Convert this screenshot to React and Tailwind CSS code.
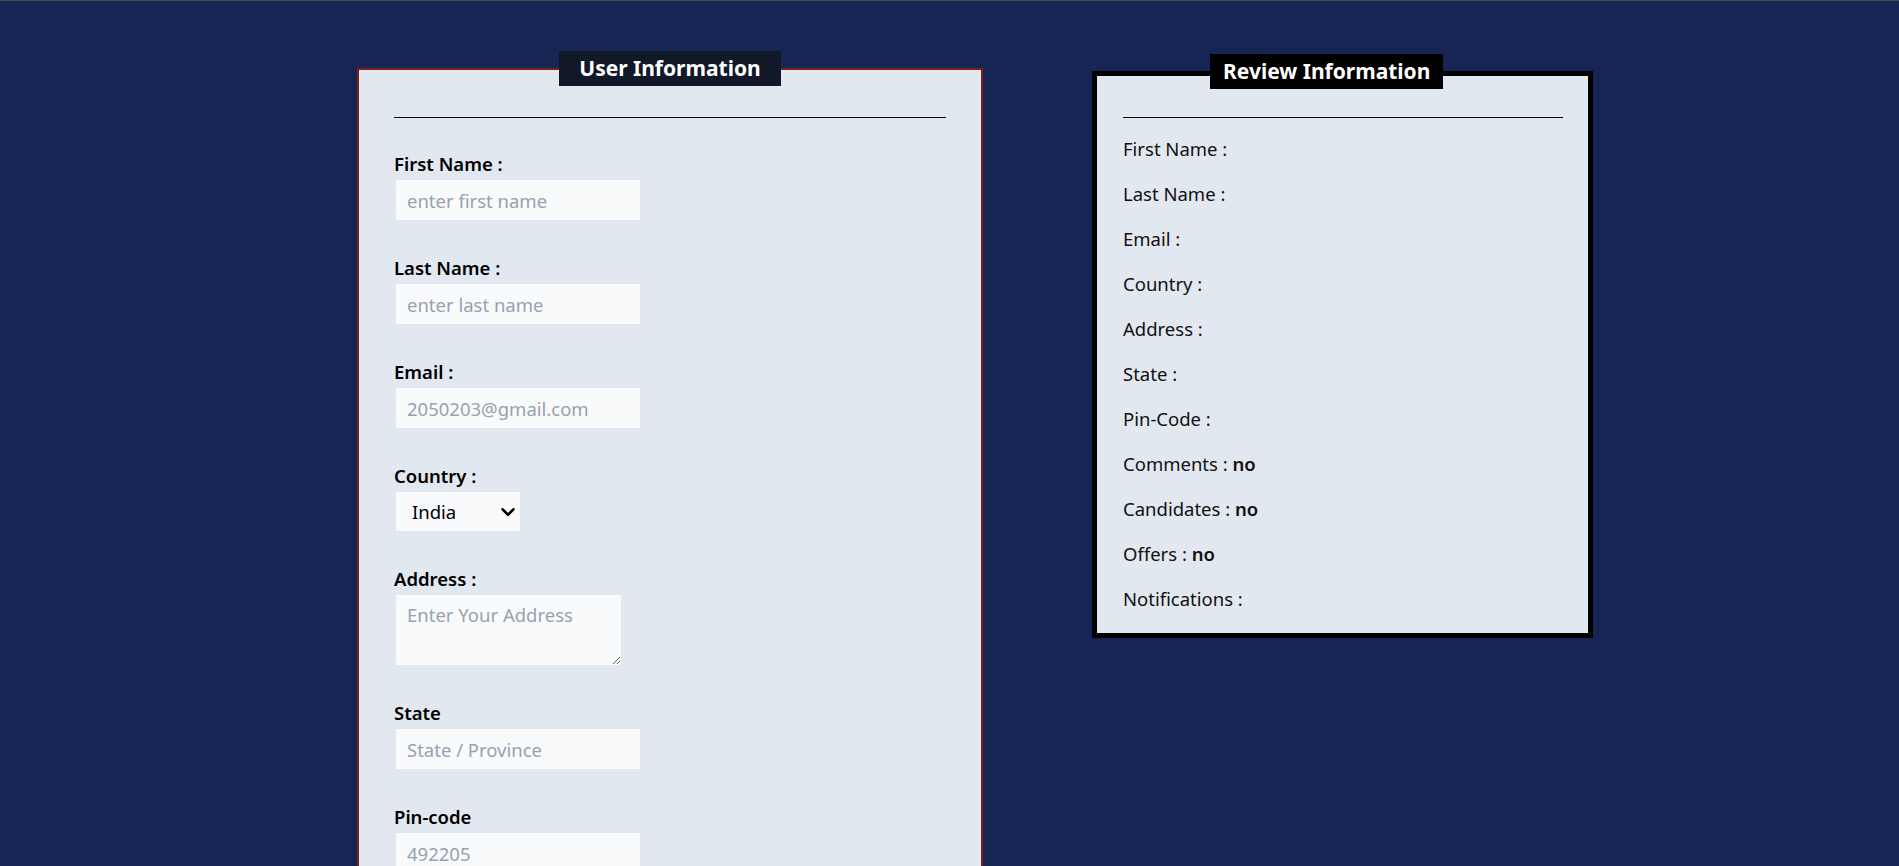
import { useState } from "react"
import { ChevronDown } from "lucide-react"

const Field = ({ label, children }) => {
  return (
    <div className="flex flex-col items-start mb-[36px]">
      <label className="h-6 leading-6 font-semibold text-black">{label}</label>
      <div className="mt-1 ml-[2px]">{children}</div>
    </div>
  )
}

const inputCls =
  "w-[244px] h-10 bg-slate-50 px-[11px] text-black outline-none placeholder:text-gray-400"

const ReviewRow = ({ name, value }) => (
  <p className="h-6 leading-6 text-[#111]">
    {name} : {value && <span className="font-semibold">{value}</span>}
  </p>
)

const App = () => {
  const [country, setCountry] = useState("India")

  const rows = [
    ["First Name", ""],
    ["Last Name", ""],
    ["Email", ""],
    ["Country", ""],
    ["Address", ""],
    ["State", ""],
    ["Pin-Code", ""],
    ["Comments", "no"],
    ["Candidates", "no"],
    ["Offers", "no"],
    ["Notifications", ""],
  ]

  return (
    <div className="h-screen overflow-hidden bg-[#172554] font-['Noto_Sans',sans-serif] text-[18.5px]">
      <div className="h-px bg-[#4d4d4d]" />
      <div className="flex items-start pl-[357px] gap-[109px] pt-[67px]">
        {/* form */}
        <div className="w-[626px] border-2 border-[#7f1d1d] bg-slate-200 px-[35px] flex flex-col">
          <h2 className="self-center -mt-[19px] h-[35px] px-5 flex items-center bg-[#111827] text-white font-bold text-[21px]">
            User Information
          </h2>
          <div className="mt-[31px] h-px bg-black" />
          <div className="mt-[34px]">
            <Field label="First Name :">
              <input className={inputCls} placeholder="enter first name" />
            </Field>
            <Field label="Last Name :">
              <input className={inputCls} placeholder="enter last name" />
            </Field>
            <Field label="Email :">
              <input className={inputCls} placeholder="2050203@gmail.com" />
            </Field>
            <Field label="Country :">
              <div className="relative">
                <select
                  value={country}
                  onChange={(e) => setCountry(e.target.value)}
                  className="appearance-none w-[124px] h-[39px] bg-slate-50 pl-4 pr-6 text-black outline-none"
                >
                  <option>India</option>
                  <option>USA</option>
                  <option>Canada</option>
                </select>
                <ChevronDown
                  size={22}
                  strokeWidth={2.7}
                  className="pointer-events-none absolute right-px top-[9px] text-black"
                />
              </div>
            </Field>
            <Field label="Address :">
              <textarea
                className="block w-[225px] h-[70px] bg-slate-50 px-[11px] py-2 leading-6 text-black outline-none placeholder:text-gray-400"
                placeholder="Enter Your Address"
              />
            </Field>
            <Field label="State">
              <input className={inputCls} placeholder="State / Province" />
            </Field>
            <Field label="Pin-code">
              <input className={inputCls} placeholder="492205" />
            </Field>
          </div>
        </div>

        {/* review */}
        <div className="mt-[3px] w-[501px] border-[5px] border-black bg-slate-200 pl-[26px] pr-[25px] pb-[22px] flex flex-col">
          <h2 className="self-start ml-[87px] -mt-[22px] h-[35px] px-[13px] flex items-center bg-black text-white font-bold text-[21px]">
            Review Information
          </h2>
          <div className="mt-[28px] h-px bg-black" />
          <div className="mt-[19px] flex flex-col gap-[21px]">
            {rows.map(([name, value]) => (
              <ReviewRow key={name} name={name} value={value} />
            ))}
          </div>
        </div>
      </div>
    </div>
  )
}

export default App
